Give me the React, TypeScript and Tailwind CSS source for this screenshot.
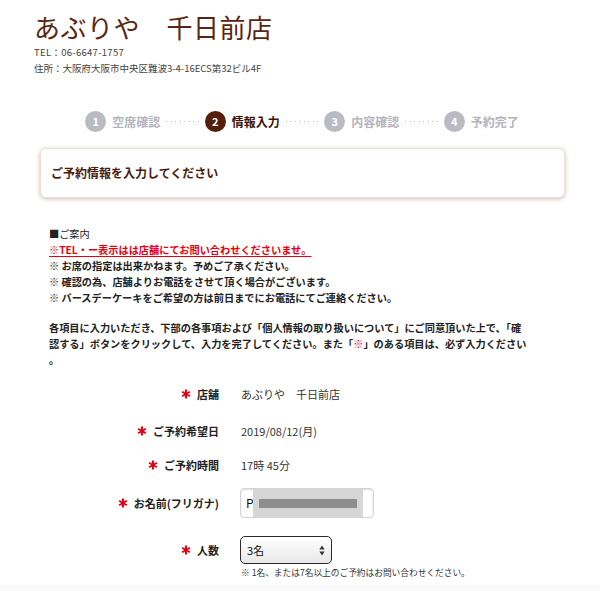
const jp = { fontFamily: '"Noto Sans CJK JP", "Noto Sans", sans-serif' };

const steps = [
  { n: 1, label: '空席確認' },
  { n: 2, label: '情報入力', active: true },
  { n: 3, label: '内容確認' },
  { n: 4, label: '予約完了' },
];

function Dots() {
  return (
    <div className="flex items-center gap-[3.5px] mx-[6px]">
      {Array.from({ length: 8 }).map((_, i) => (
        <span key={i} className="block w-px h-px bg-[#b8b8c0]" />
      ))}
    </div>
  );
}

function Star() {
  return (
    <svg width="10" height="10" viewBox="0 0 10 10" className="shrink-0">
      <g stroke="#e60012" strokeWidth="2" strokeLinecap="butt">
        <line x1="5" y1="0.5" x2="5" y2="9.5" />
        <line x1="1.1" y1="2.75" x2="8.9" y2="7.25" />
        <line x1="1.1" y1="7.25" x2="8.9" y2="2.75" />
      </g>
    </svg>
  );
}

function Row({ label, children, h }: { label: string; children: React.ReactNode; h: string }) {
  return (
    <div className={`flex items-center ${h}`}>
      <div className="w-[219px] flex items-center justify-end gap-[6px] text-[11px] font-bold text-[#222]">
        <Star />
        <span>{label}</span>
      </div>
      <div className="ml-[22px] text-[11px] text-[#333]">{children}</div>
    </div>
  );
}

export default function App() {
  return (
    <div className="w-[600px] h-[591px] bg-white relative overflow-hidden" style={jp}>
      {/* Header */}
      <div className="pl-[34px] pt-[10px]">
        <h1 className="text-[26px] leading-[34px] text-[#5a2614] tracking-[0.5px] font-normal">あぶりや　千日前店</h1>
        <p className="text-[9.5px] leading-[16px] text-[#444] tracking-[0.3px]">TEL：06-6647-1757</p>
        <p className="text-[9.5px] leading-[16px] text-[#444]">住所：大阪府大阪市中央区難波3-4-16ECS第32ビル4F</p>
      </div>

      {/* Steps */}
      <div className="flex items-center justify-center mt-[35px] pl-[4px]">
        {steps.map((s, i) => (
          <div key={s.n} className="flex items-center">
            <div className="flex items-center gap-[6px]">
              <div
                className={`w-[21px] h-[21px] rounded-full flex items-center justify-center text-white text-[11px] font-bold ${
                  s.active ? 'bg-[#55200b]' : 'bg-[#babac2]'
                }`}
              >
                {s.n}
              </div>
              <span className={`text-[12px] font-bold ${s.active ? 'text-[#3a1608]' : 'text-[#b4b4bc]'}`}>{s.label}</span>
            </div>
            {i < steps.length - 1 && <Dots />}
          </div>
        ))}
      </div>

      {/* Card */}
      <div className="mx-[40px] w-[525px] mt-[16px] h-[50px] rounded-[6px] bg-white border border-[#eadfda] shadow-[0_1px_4px_rgba(110,60,40,0.35)] flex items-center px-[10px]">
        <h2 className="text-[12px] font-bold text-[#4a1c0c]">ご予約情報を入力してください</h2>
      </div>

      {/* Notices */}
      <div className="pl-[49px] mt-[28px] text-[10.2px] leading-[16px] text-[#222]">
        <p className="font-normal">■ご案内</p>
        <p className="font-bold text-[#e60012] underline underline-offset-[2px] w-fit">※TEL・ー表示はは店舗にてお問い合わせくださいませ。</p>
        <p className="font-bold">※ お席の指定は出来かねます。予めご了承ください。</p>
        <p className="font-bold">※ 確認の為、店舗よりお電話をさせて頂く場合がございます。</p>
        <p className="font-bold">※ バースデーケーキをご希望の方は前日までにお電話にてご連絡ください。</p>
        <p className="font-bold mt-[14px]">
          各項目に入力いただき、下部の各事項および「個人情報の取り扱いについて」にご同意頂いた上で、「確
          <br />
          認する」ボタンをクリックして、入力を完了してください。また「<span className="text-[#e60012]">※</span>」のある項目は、必ず入力ください
          <br />。
        </p>
      </div>

      {/* Form */}
      <div className="mt-[7px]">
        <Row label="店舗" h="h-[38px]">あぶりや　千日前店</Row>
        <Row label="ご予約希望日" h="h-[36px]">2019/08/12(月)</Row>
        <Row label="ご予約時間" h="h-[32px]">17時 45分</Row>
        <div className="h-[7px]" />
        <Row label="お名前(フリガナ)" h="h-[30px]">
          <div className="w-[134px] h-[30px] rounded-[4px] border border-[#d4d4d4] bg-white shadow-[inset_0_1px_2px_rgba(0,0,0,0.15)] flex items-center relative -ml-[1px]">
            <span className="pl-[5px] text-[12px] text-[#111]">P</span>
            <div className="absolute left-[12px] top-0 w-[110px] h-[29px] bg-[#d6d6d6] flex items-center justify-center">
              <div className="w-[98px] h-[9px] bg-[#8e8e8e]" />
            </div>
          </div>
        </Row>
        <div className="h-[17px]" />
        <Row label="人数" h="h-[30px]">
          <div className="w-[92px] h-[28px] -ml-[1px] rounded-[5px] border-[1.5px] border-[#2a2a2a] bg-gradient-to-b from-white to-[#e8e8e8] flex items-center justify-between px-[6px]">
            <span className="text-[11px] text-[#111]">3名</span>
            <svg width="6" height="11" viewBox="0 0 6 11">
              <path d="M3 0.5 L5.6 4.5 H0.4 Z" fill="#333" />
              <path d="M3 10.5 L5.6 6.5 H0.4 Z" fill="#333" />
            </svg>
          </div>
        </Row>
        <p className="pl-[241px] text-[8.7px] text-[#333] mt-[1px]">※ 1名、または7名以上のご予約はお問い合わせください。</p>
      </div>

      <div className="absolute left-0 right-0 bottom-0 h-[6px] bg-[#fafafa]" />
    </div>
  );
}
